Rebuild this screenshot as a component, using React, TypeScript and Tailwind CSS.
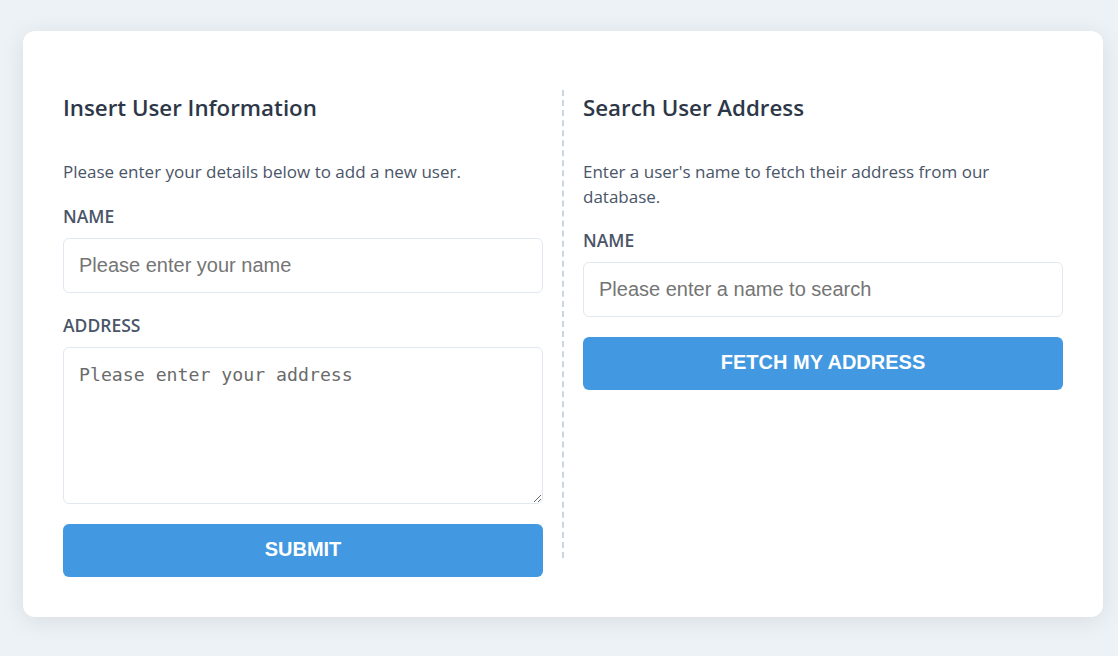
import { useState } from "react";

const labelCls =
  "block mb-[10px] text-[17.5px] leading-[24px] font-semibold text-[#4a5568] uppercase";
const inputCls =
  "w-full h-[55px] px-[15px] border border-[#e2e8f0] rounded-[6px] bg-white text-[20px] text-[#2d3748] placeholder:text-[#757575] outline-none font-['Liberation_Sans',Arial,sans-serif]";
const buttonCls =
  "w-full h-[53px] pb-[3px] rounded-[6px] bg-[#4299e1] text-white text-[20px] font-bold uppercase font-['Liberation_Sans',Arial,sans-serif]";

const App = () => {
  const [name, setName] = useState("");
  const [address, setAddress] = useState("");
  const [search, setSearch] = useState("");

  return (
    <div className="min-h-[656px] bg-[#edf2f7] pt-[31px] pl-[23px] font-['Open_Sans',sans-serif]">
      <div className="w-[1080px] h-[586px] bg-white rounded-[12px] shadow-[0_4px_24px_rgba(0,0,0,0.09)] p-[40px] flex">
        {/* insert form */}
        <div className="w-[480px] flex flex-col">
          <h2 className="mt-[21px] text-[22.3px] leading-[32px] font-semibold text-[#2d3748]">
            Insert User Information
          </h2>
          <p className="mt-[35px] mb-[20px] text-[17px] leading-[25px] text-[#4a5568]">
            Please enter your details below to add a new user.
          </p>
          <label className={labelCls}>Name</label>
          <input
            className={inputCls}
            placeholder="Please enter your name"
            value={name}
            onChange={(e) => setName(e.target.value)}
          />
          <label className={labelCls + " mt-[20px]"}>Address</label>
          <textarea
            className="w-full h-[157px] px-[15px] py-[14px] border border-[#e2e8f0] rounded-[6px] text-[18.2px] leading-[26px] text-[#2d3748] placeholder:text-[#6b6b6b] outline-none font-['DejaVu_Sans_Mono',monospace]"
            placeholder="Please enter your address"
            value={address}
            onChange={(e) => setAddress(e.target.value)}
          />
          <button className={buttonCls + " mt-[20px]"}>Submit</button>
        </div>

        <div className="mx-[19px] my-[19px] border-l-2 border-dashed border-[#cbd5e0]" />

        {/* search form */}
        <div className="w-[480px] flex flex-col">
          <h2 className="mt-[21px] text-[22.3px] leading-[32px] font-semibold text-[#2d3748]">
            Search User Address
          </h2>
          <p className="mt-[35px] mb-[19px] text-[17px] leading-[25px] text-[#4a5568] pr-[50px]">
            Enter a user's name to fetch their address from our database.
          </p>
          <label className={labelCls}>Name</label>
          <input
            className={inputCls}
            placeholder="Please enter a name to search"
            value={search}
            onChange={(e) => setSearch(e.target.value)}
          />
          <button className={buttonCls + " mt-[20px]"}>Fetch my address</button>
        </div>
      </div>
    </div>
  );
};

export default App;
